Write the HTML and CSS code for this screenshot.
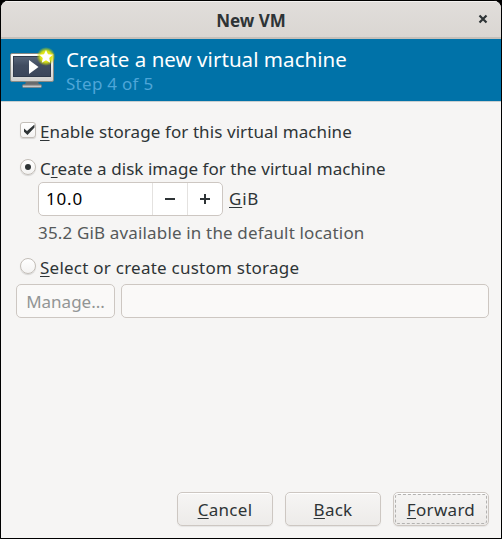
FILE: index.html
```html
<!DOCTYPE html>
<html lang="en">
<head>
<meta charset="utf-8">
<title>New VM</title>
<link rel="stylesheet" href="styles.css">
</head>
<body>
<div class="window">
  <header class="titlebar">
    <h1 class="title">New VM</h1>
    <svg class="close" width="10" height="10" viewBox="0 0 10 10"><path d="M1.500 1.500 8.500 8.500M8.500 1.500 1.500 8.500"/></svg>
  </header>
  <section class="banner">
    <svg class="vm-icon" width="48" height="48" viewBox="0 0 48 48">
      <defs>
        <linearGradient id="bezel" x2="0" y2="1"><stop offset="0" stop-color="#fff"/><stop offset="1" stop-color="#d0d0ce"/></linearGradient>
        <linearGradient id="screen" x2="0" y2="1"><stop offset="0" stop-color="#59667a"/><stop offset=".45" stop-color="#414c60"/><stop offset="1" stop-color="#3b465a"/></linearGradient>
        <linearGradient id="stand" x2="0" y2="1"><stop offset="0" stop-color="#777"/><stop offset="1" stop-color="#eee"/></linearGradient>
        <radialGradient id="glow"><stop offset="0" stop-color="#fdf53c"/><stop offset=".6" stop-color="#dfe60d" stop-opacity=".95"/><stop offset="1" stop-color="#b8d000" stop-opacity="0"/></radialGradient>
      </defs>
      <path d="M18 35h12l1 4H17z" fill="#686b6e"/>
      <rect x="14.500" y="38.500" width="19" height="3" rx="1" fill="url(#stand)" stroke="#777" stroke-width=".7"/>
      <rect x="2.500" y="7.500" width="43" height="28" rx="1.500" fill="url(#bezel)" stroke="#888a85"/>
      <rect x="5.500" y="10.500" width="37" height="20" fill="url(#screen)" stroke="#303a4b"/>
      <path d="M21 14v14l9.500-7z" fill="#fff"/>
      <circle cx="38" cy="10.500" r="9.500" fill="url(#glow)"/>
      <path d="m38 4 2 4.200 4.700.5-3.500 3.200 1 4.900-4.200-2.500-4.200 2.500 1-4.900-3.500-3.200 4.700-.5z" fill="#fff"/>
    </svg>
    <div class="heading">
      <div class="heading-title"><span>Create a new virtual machine</span></div>
      <div class="heading-step"><span>Step 4 of 5</span></div>
    </div>
  </section>
  <main class="content">
    <label class="option option-enable">
      <span class="check"><svg width="16" height="16" viewBox="0 0 16 16"><path d="M4 6.500 7 9l7.500-6.500v3L7.500 13 4 9.800z"/></svg></span>
      <span class="t-enable"><u>E</u>nable storage for this virtual machine</span>
    </label>
    <label class="option option-create">
      <span class="radio radio-on"></span>
      <span class="t-create">C<u>r</u>eate a disk image for the virtual machine</span>
    </label>
    <div class="size-row">
      <div class="spin">
        <span class="value">10.0</span>
        <span class="step"><svg width="12" height="12" viewBox="0 0 12 12"><path d="M1 6h10"/></svg></span>
        <span class="step"><svg width="12" height="12" viewBox="0 0 12 12"><path d="M1 6h10M6 1v10"/></svg></span>
      </div>
      <span class="t-gib"><u>G</u>iB</span>
    </div>
    <div class="hint"><span>35.2 GiB available in the default location</span></div>
    <label class="option option-select">
      <span class="radio"></span>
      <span class="t-select"><u>S</u>elect or create custom storage</span>
    </label>
    <div class="custom-row">
      <span class="manage"><span>Manage...</span></span>
      <span class="path"></span>
    </div>
  </main>
  <footer class="actions">
    <span class="button t-cancel"><u>C</u>ancel</span>
    <span class="button t-back"><u>B</u>ack</span>
    <span class="button focused t-forward"><u>F</u>orward</span>
  </footer>
</div>
</body>
</html>
```
FILE: styles.css
```css
* { box-sizing: border-box; }
body {
  margin: 0;
  background: #000;
  color: #2e3436;
  font: 17px/24px "Noto Sans", sans-serif;
  white-space: nowrap;
}
.window {
  height: 539px;
  border: 1px solid #000;
  display: flex;
  flex-direction: column;
  background: #f6f5f4;
  border-radius: 8px 8px 0 0;
  overflow: hidden;
}
.titlebar {
  height: 38px;
  display: grid;
  grid-template-columns: 1fr auto 1fr;
  align-items: center;
  background: linear-gradient(#e1dedb, #dad6d2);
  border-bottom: 2px solid #c4bfb9;
  box-shadow: inset 0 1px #f3f1f0;
}
.title { grid-column: 2; margin: 3px 0 0; font-size: 17px; line-height: 24px; }
.close { justify-self: end; margin-right: 13px; fill: none; stroke: #2e3436; stroke-width: 2.2; }
.banner {
  height: 63px;
  display: flex;
  padding: 7px 0 0 7px;
  background: #0072a8;
  border-bottom: 1px solid #c9cfd0;
}
.heading { padding-left: 10px; }
.heading-title { font-size: 20.500px; line-height: 26px; letter-spacing: .05px; color: #fff; }
.heading-step { line-height: 24px; letter-spacing: .28px; color: #4ea6d8; }
.content { padding: 18px 12px 0 15px; flex: 1; }
.option { display: flex; height: 24px; padding-left: 4px; }
.check, .radio {
  flex: none;
  width: 16px;
  height: 16px;
  margin: 2px 4px 0 0;
  border: 1px solid #c3beb8;
  background: linear-gradient(#fff, #f4f3f2);
  box-shadow: 0 1px 1px #0002;
}
.check { border-radius: 3px; }
.check svg { display: block; margin: -1px; fill: #2e3436; }
.radio { border-radius: 50%; display: grid; place-items: center; }
.radio-on::after { content: ""; width: 6px; height: 6px; border-radius: 50%; background: #2e3436; }
u { text-decoration-thickness: 1px; text-underline-offset: 2px; text-decoration-skip-ink: none; }
.t-enable { letter-spacing: .09px; }
.t-create { letter-spacing: .055px; }
.t-select { letter-spacing: .24px; }
.t-gib { letter-spacing: .8px; }
.option-create { margin-top: 13px; }
.size-row { display: flex; align-items: center; gap: 6px; height: 34px; margin: 1px 0 0 22px; }
.spin {
  display: grid;
  grid-template-columns: 1fr 35px 35px;
  width: 185px;
  height: 34px;
  border: 1px solid #cdc7c2;
  border-radius: 5px;
  background: #fff;
}
.value { padding: 4px 0 0 7px; letter-spacing: .8px; color: #000; }
.step { border-left: 1px solid #e4e2e0; display: grid; place-items: center; }
.step svg { stroke: #2e3436; stroke-width: 2; }
.hint { margin: 5px 0 0 22px; letter-spacing: .16px; color: #55595a; }
.option-select { margin-top: 11px; }
.custom-row { display: flex; gap: 6px; margin-top: 4px; }
.manage, .path { height: 34px; border: 1px solid #cdc7c2; border-radius: 5px; background: #faf9f8; }
.manage { width: 99px; text-align: center; padding-top: 5px; color: #929595; }
.path { flex: 1; }
.actions { display: flex; justify-content: flex-end; gap: 12px; padding: 0 12px 12px; }
.button {
  width: 96px;
  height: 34px;
  padding-top: 5px;
  text-align: center;
  border: 1px solid #cdc7c2;
  border-radius: 5px;
  background: linear-gradient(#f6f5f4, #edebe9);
  box-shadow: inset 0 1px #fff, 0 1px 1px #0001;
}
.t-cancel { letter-spacing: .3px; }
.t-back { letter-spacing: .25px; }
.t-forward { letter-spacing: .3px; }
.focused { outline: 1px dashed #b3b2b0; outline-offset: -3px; }
```
